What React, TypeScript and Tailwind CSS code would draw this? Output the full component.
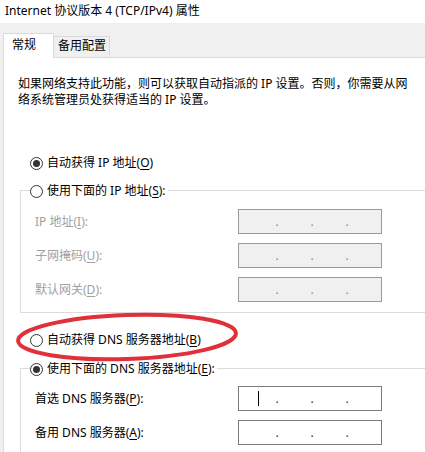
const font = '"Noto Sans", "Noto Sans CJK SC", sans-serif';

function Radio({ checked }: { checked?: boolean }) {
  return (
    <span className="w-[13px] h-[13px] rounded-full border border-[#333] bg-white flex items-center justify-center shrink-0">
      {checked && <span className="w-[7px] h-[7px] rounded-full bg-[#333]" />}
    </span>
  );
}

function Key({ k }: { k: string }) {
  return <span className="underline underline-offset-2">{k}</span>;
}

function IpBox({ disabled, caret }: { disabled?: boolean; caret?: boolean }) {
  return (
    <div
      className={`w-[144px] h-[25px] flex items-center border ${
        disabled ? "bg-[#f0f0f0] border-[#9a9a9a] text-[#8a8a8a]" : "bg-white border-[#7a7a7a] text-[#333]"
      }`}
    >
      {caret ? (
        <>
          <span className="ml-[19px] w-px h-[15px] bg-black" />
          <span className="ml-[13px] w-[10px] text-center">.</span>
        </>
      ) : (
        <span className="ml-[33px] w-[10px] text-center">.</span>
      )}
      <span className="ml-[25px] w-[10px] text-center">.</span>
      <span className="ml-[25px] w-[10px] text-center">.</span>
    </div>
  );
}

function Field({
  label,
  disabled,
  caret,
}: {
  label: React.ReactNode;
  disabled?: boolean;
  caret?: boolean;
}) {
  return (
    <div className="flex items-center pl-[14px] h-[25px]">
      <span className={`w-[203px] ${disabled ? "text-[#a0a0a0]" : "text-black"}`}>{label}</span>
      <IpBox disabled={disabled} caret={caret} />
    </div>
  );
}

export default function App() {
  return (
    <div
      className="relative w-[425px] h-[452px] overflow-hidden bg-[#f0f0f0] text-[12px] leading-[16px] text-black"
      style={{ fontFamily: font }}
    >
      <div className="h-[23px] bg-white flex items-center pl-[5px] pb-[2px]">
        Internet 协议版本 4 (TCP/IPv4) 属性
      </div>

      <div className="h-[34px] flex items-end pl-[3px]">
        <div className="relative z-10 -mb-px h-[25px] w-[51px] bg-white border border-b-0 border-[#d9d9d9] flex items-center pl-[8px] pb-[2px]">
          常规
        </div>
        <div className="h-[21px] w-[56px] bg-[#f0f0f0] border border-l-0 border-b-0 border-[#d9d9d9] flex items-center pl-[4px] pb-[2px]">
          备用配置
        </div>
      </div>

      <div className="ml-[3px] w-[460px] h-[395px] bg-white border-l border-t border-[#d9d9d9]">
        <p className="pl-[14px] pt-[18px] whitespace-nowrap">
          如果网络支持此功能，则可以获取自动指派的 IP 设置。否则，你需要从网
          <br />
          络系统管理员处获得适当的 IP 设置。
        </p>

        <div className="mt-[47px] pl-[26px] h-[16px] flex items-center gap-[4px]">
          <Radio checked />
          <span>
            自动获得 IP 地址(<Key k="O" />)
          </span>
        </div>

        <div className="mt-[19px] ml-[16px] border-t border-l border-b border-[#dcdcdc] pb-[10px]">
          <div className="-mt-[8px] ml-[9px] h-[16px] w-fit bg-white pr-[2px] flex items-center gap-[4px]">
            <Radio />
            <span>
              使用下面的 IP 地址(<Key k="S" />):
            </span>
          </div>
          <div className="mt-[10px] flex flex-col gap-[9px]">
            <Field disabled label={<>IP 地址(<Key k="I" />):</>} />
            <Field disabled label={<>子网掩码(<Key k="U" />):</>} />
            <Field disabled label={<>默认网关(<Key k="D" />):</>} />
          </div>
        </div>

        <div className="mt-[19px] pl-[26px] h-[16px] flex items-center gap-[4px]">
          <Radio />
          <span>
            自动获得 DNS 服务器地址(<Key k="B" />)
          </span>
        </div>

        <div className="mt-[20px] ml-[16px] border-t border-l border-[#dcdcdc] pb-[20px]">
          <div className="-mt-[8px] ml-[9px] h-[16px] w-fit bg-white pr-[2px] flex items-center gap-[4px]">
            <Radio checked />
            <span>
              使用下面的 DNS 服务器地址(<Key k="E" />):
            </span>
          </div>
          <div className="mt-[9px] flex flex-col gap-[9px]">
            <Field caret label={<>首选 DNS 服务器(<Key k="P" />):</>} />
            <Field label={<>备用 DNS 服务器(<Key k="A" />):</>} />
          </div>
        </div>
      </div>

      <svg
        className="absolute left-[10px] top-[308px] pointer-events-none"
        width="236"
        height="60"
        viewBox="0 0 236 60"
      >
        <ellipse
          cx="117"
          cy="29"
          rx="109"
          ry="22"
          fill="none"
          stroke="#e0313a"
          strokeWidth="4"
          transform="rotate(-2 117 29)"
        />
      </svg>
    </div>
  );
}
